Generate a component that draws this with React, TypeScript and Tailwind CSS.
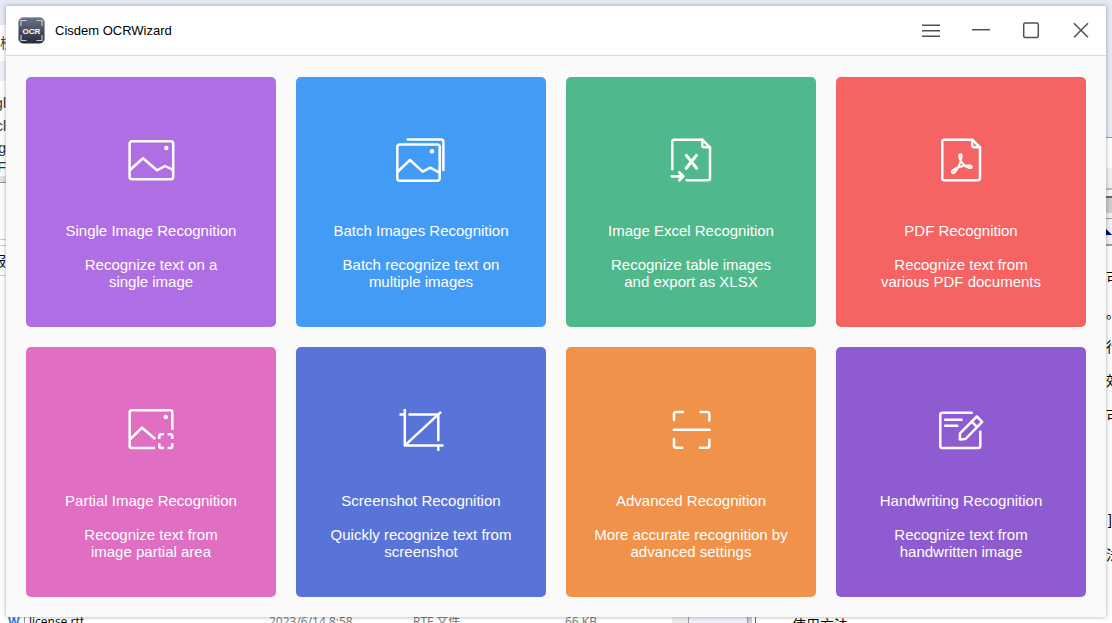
import { useState } from "react";
import type { ReactNode } from "react";
import clsx from "clsx";

interface Feature {
  title: string;
  lines: [string, string];
  color: string;
  icon: ReactNode;
}

interface Strip {
  size: string;
  look?: string;
  text?: string;
}

const PAGE_FOLD = "M35.3 3.7V9.5q0 1.8 1.8 1.8H43";

const features: Feature[] = [
  {
    title: "Single Image Recognition",
    lines: ["Recognize text on a", "single image"],
    color: "bg-[#b06ee4]",
    icon: (
      <>
        <rect x="2.6" y="5.2" width="43.6" height="38" rx="2.5" />
        <path d="M3 34 16 22.3 30 34.3 38 30 45.5 33.7" />
        <circle cx="39.3" cy="12" r="2.2" fill="currentColor" stroke="none" />
      </>
    ),
  },
  {
    title: "Batch Images Recognition",
    lines: ["Batch recognize text on", "multiple images"],
    color: "bg-[#429bf4]",
    icon: (
      <>
        <path d="M10.7 3.5H44q2.4 0 2.4 2.4V34" />
        <rect x="0.3" y="8.4" width="42.4" height="36.4" rx="2.5" />
        <path d="M1 35.5 13 24 25.7 35.7 33.3 31.7 42 36.3" />
        <circle cx="35" cy="15.3" r="2.2" fill="currentColor" stroke="none" />
      </>
    ),
  },
  {
    title: "Image Excel Recognition",
    lines: ["Recognize table images", "and export as XLSX"],
    color: "bg-[#50b98b]",
    icon: (
      <>
        <path d="M5.3 33.2V5.7q0-2 2-2H35.3L43 11.3V42.3q0 2-2 2H19.5" />
        <path d={PAGE_FOLD} />
        <path d="M18.6 18.4 30.4 33.2M30.2 18.4 18.4 33.2" strokeWidth="3" strokeLinecap="butt" />
        <path d="M4.8 40.3H16M12.3 36.4 16.4 40.3 12.3 44.2" strokeWidth="2.8" />
      </>
    ),
  },
  {
    title: "PDF Recognition",
    lines: ["Recognize text from", "various PDF documents"],
    color: "bg-[#f56363]",
    icon: (
      <>
        <path d="M7.3 3.7H35.3L43 11.3V42.3q0 2-2 2H7.3q-2 0-2-2V5.7q0-2 2-2Z" />
        <path d={PAGE_FOLD} />
        <path
          d="M24.6 20.2C24.6 17.6 22 17.6 22.1 20.2 22.3 23.4 26.6 30.6 32.6 32 35.2 32.5 35.4 29.6 32.8 29.5 27 29.3 19.6 31.6 15.6 34.4 13.6 36 15.6 38 17.4 36.6 20.6 33.8 24.4 25.4 24.6 20.2Z"
          strokeWidth="2"
        />
      </>
    ),
  },
  {
    title: "Partial Image Recognition",
    lines: ["Recognize text from", "image partial area"],
    color: "bg-[#e06ec2]",
    icon: (
      <>
        <path d="M28 42H4.7q-2 0-2-2V6.3q0-2 2-2H43.3q2 0 2 2V23.7" strokeLinecap="butt" />
        <path d="M3.5 33 15 21.7 28.3 33" strokeLinecap="butt" />
        <circle cx="38.7" cy="11" r="2.2" fill="currentColor" stroke="none" />
        <path
          d="M32.3 33V30.2q0-2 2-2H37M40.6 28.2H43.3q2 0 2 2V33M45.3 37.2V40q0 2-2 2H40.6M37 42H34.3q-2 0-2-2V37.2"
          strokeLinecap="butt"
        />
      </>
    ),
  },
  {
    title: "Screenshot Recognition",
    lines: ["Quickly recognize text from", "screenshot"],
    color: "bg-[#5874d8]",
    icon: (
      <g strokeLinecap="butt">
        <path d="M7.8 3V39.5H46.5M2.5 8.5H7.8" />
        <path d="M11.5 8.5H41.3V35.2M41.3 39.5V45" />
        <path d="M8.5 38.8 44 5.8" />
      </g>
    ),
  },
  {
    title: "Advanced Recognition",
    lines: ["More accurate recognition by", "advanced settings"],
    color: "bg-[#f0924a]",
    icon: (
      <>
        <path d="M7 14V8q0-2 2-2H16M33.5 6H40.3q2 0 2 2V14.5" />
        <path d="M6.8 23.7H42.6" />
        <path d="M7 33V39.7q0 2 2 2H15.3M33 41.7H40.3q2 0 2-2V33.7" />
      </>
    ),
  },
  {
    title: "Handwriting Recognition",
    lines: ["Recognize text from", "handwritten image"],
    color: "bg-[#8f5bd0]",
    icon: (
      <>
        <path d="M34.7 6.7H5.3q-2 0-2 2V40q0 2 2 2H41.3q2 0 2-2V25.7" />
        <path d="M8.2 13.7H24.5M8.2 19.7H20.3" />
        <path d="M22.8 33.5 23 27.3 39.8 10.5 45.2 15.8 28.5 33Z" />
        <path d="M34.7 15.7 40 20.8" />
      </>
    ),
  },
];

// slivers of the windows that stay visible around the app
const leftEdge: Strip[] = [
  { size: "h-[25px]", look: "bg-[#e4e8f4]" },
  { size: "h-[36px]", look: "text-[#444] justify-start", text: "校" },
  { size: "h-[20px]", look: "bg-[#eceff7]" },
  { size: "h-[10px]" },
  { size: "h-[23px]", look: "text-[#333] justify-end", text: "gl" },
  { size: "h-[23px]", look: "text-[#333] justify-end", text: "cl" },
  { size: "h-[21px]", look: "text-[#333] justify-end", text: "g" },
  { size: "h-[18px]", look: "text-[#333] justify-end", text: "F" },
  { size: "h-[7px]", look: "border-b border-[#999] bg-[#e2e2e2]" },
  { size: "h-[57px]", look: "border-b border-[#ccc]" },
  { size: "h-[6px]", look: "border-b border-[#ccc]" },
  { size: "h-[30px]", look: "border-b border-[#ccc] text-black justify-end", text: "服" },
];

const rightEdge: Strip[] = [
  { size: "h-[81px]", look: "bg-[#e4e8f4]" },
  { size: "h-[57px]", look: "bg-[#e9ecf6] border-b border-[#999]" },
  { size: "h-[30px]" },
  { size: "h-[22px]", look: "bg-[#efefef] border-b-2 border-[#bbb]" },
  { size: "h-[8px]", look: "bg-[#f5f5f5] border-b-2 border-[#666]" },
  { size: "h-[15px]", look: "bg-[#ccc]" },
  { size: "h-[6px]", look: "bg-[#eee] border-b border-[#999]" },
  { size: "h-[27px]", look: "bg-[#f0f0f0] border-b-2 border-[#999] text-[8px] text-[#000080] justify-end", text: "◣" },
  { size: "h-[14px]" },
  { size: "h-[36px]", look: "text-black", text: "可" },
  { size: "h-[34px]", look: "text-black", text: "。" },
  { size: "h-[34px]", look: "text-black", text: "行" },
  { size: "h-[34px]", look: "text-black", text: "效" },
  { size: "h-[36px]", look: "text-black", text: "可" },
  { size: "h-[68px]" },
  { size: "h-[36px]", look: "text-black justify-end", text: "]" },
  { size: "h-[34px]", look: "text-black", text: "法" },
];

function EdgeColumn({ strips }: { strips: Strip[] }) {
  return (
    <div aria-hidden="true" className="flex w-1.5 shrink-0 flex-col overflow-hidden bg-white">
      {strips.map((s, i) => (
        <div
          key={i}
          className={clsx(
            "flex shrink-0 items-center overflow-hidden leading-none",
            !s.look?.includes("text-[8px]") && "text-sm",
            s.size,
            s.look,
          )}
        >
          {s.text}
        </div>
      ))}
    </div>
  );
}

function BottomEdge() {
  return (
    <div
      aria-hidden="true"
      className="flex h-1.5 overflow-hidden bg-white pl-2 font-['Open_Sans','Noto_Sans_CJK_SC',sans-serif] text-xs leading-[10px] whitespace-nowrap text-[#777]"
    >
      <span className="flex w-[21px] shrink-0 gap-1 font-bold text-[#2b7de0]">
        W<span className="h-3 w-px bg-[#999]" />
      </span>
      <span className="w-60 shrink-0 text-black">license.rtf</span>
      <span className="w-36 shrink-0">2023/6/14 8:58</span>
      <span className="w-[152px] shrink-0">RTF 文件</span>
      <span className="w-[107px] shrink-0">66 KB</span>
      <span className="w-4 shrink-0 bg-[#eee]" />
      <span className="w-[60px] shrink-0 border-x border-[#999] bg-[#eef0fa]" />
      <span className="w-1 shrink-0 bg-[#ccc]" />
      <span className="w-1 shrink-0 border-r border-[#666]" />
      <span className="pl-9 text-sm leading-4 text-black">使用方法</span>
    </div>
  );
}

function Logo() {
  return (
    <svg viewBox="0 0 27 27" className="size-[27px]" aria-hidden="true">
      <defs>
        <linearGradient id="logo" x1="0" y1="0" x2="0" y2="1">
          <stop offset="0" stopColor="#6a7488" />
          <stop offset="1" stopColor="#262b38" />
        </linearGradient>
      </defs>
      <rect x="0.5" y="0.5" width="26" height="26" rx="5" fill="url(#logo)" stroke="#8c94a3" strokeOpacity="0.5" />
      <path
        d="M3 9V3.5H8.5M18.5 3.5H24V9M24 18V23.5H18.5M8.5 23.5H3V18"
        fill="none"
        stroke="#c5c9d1"
        strokeWidth="1.2"
      />
      <text
        x="13.5"
        y="16.500"
        textAnchor="middle"
        fill="#fff"
        className="font-['Liberation_Sans',Arial,sans-serif] text-[8px] font-bold"
      >
        OCR
      </text>
    </svg>
  );
}

function WindowButton({ label, children }: { label: string; children: ReactNode }) {
  return (
    <button
      type="button"
      aria-label={label}
      className="flex h-full w-[50px] items-center justify-center text-[#505050] hover:bg-gray-100"
    >
      <svg viewBox="0 0 20 20" className="size-5" fill="none" stroke="currentColor" strokeWidth="1.5">
        {children}
      </svg>
    </button>
  );
}

function TitleBar() {
  return (
    <header className="flex h-[50px] items-center border-b border-[#d9d9dc] bg-white pl-3">
      <Logo />
      <h1 className="ml-2.5 flex-1 pt-px text-[13px] leading-4 text-black">Cisdem OCRWizard</h1>
      <div className="flex h-full">
        <WindowButton label="Menu">
          <path d="M1 4.300H19M1 9.800H19M1 15.300H19" />
        </WindowButton>
        <WindowButton label="Minimize">
          <path d="M1 8.700H19" />
        </WindowButton>
        <WindowButton label="Maximize">
          <rect x="2.700" y="2" width="14.600" height="14.600" rx="1.500" />
        </WindowButton>
        <WindowButton label="Close">
          <path d="M3 2.300 17 16.300M17 2.300 3 16.300" />
        </WindowButton>
      </div>
    </header>
  );
}

function FeatureCard({ feature, onSelect }: { feature: Feature; onSelect: () => void }) {
  return (
    <button
      type="button"
      onClick={onSelect}
      className={clsx(
        "flex aspect-square flex-col items-center rounded-[5px] pt-[58px] text-[15px] leading-[17px] text-white",
        feature.color,
      )}
    >
      <svg
        viewBox="-1 -1 50 50"
        className="size-[50px]"
        fill="none"
        stroke="currentColor"
        strokeWidth="2.5"
        strokeLinecap="round"
        strokeLinejoin="round"
        aria-hidden="true"
      >
        {feature.icon}
      </svg>
      <span className="mt-[37px]">{feature.title}</span>
      <span className="mt-[17px]">
        {feature.lines[0]}
        <br />
        {feature.lines[1]}
      </span>
    </button>
  );
}

export default function App() {
  const [, setSelected] = useState<string | null>(null);

  return (
    <div className="overflow-hidden bg-white font-['Liberation_Sans',Arial,'Noto_Sans_CJK_SC',sans-serif]">
      <div className="flex">
        <EdgeColumn strips={leftEdge} />
        <div className="min-w-0 flex-1 bg-[#e4e8f4] pt-1.5">
          <div className="relative bg-[#fafafa] shadow-[0_0_4px_rgba(0,0,0,0.35)]">
            <TitleBar />
            <main className="grid grid-cols-4 gap-5 px-5 pt-[21px] pb-5">
              {features.map((f) => (
                <FeatureCard key={f.title} feature={f} onSelect={() => setSelected(f.title)} />
              ))}
            </main>
          </div>
        </div>
        <EdgeColumn strips={rightEdge} />
      </div>
      <BottomEdge />
    </div>
  );
}
